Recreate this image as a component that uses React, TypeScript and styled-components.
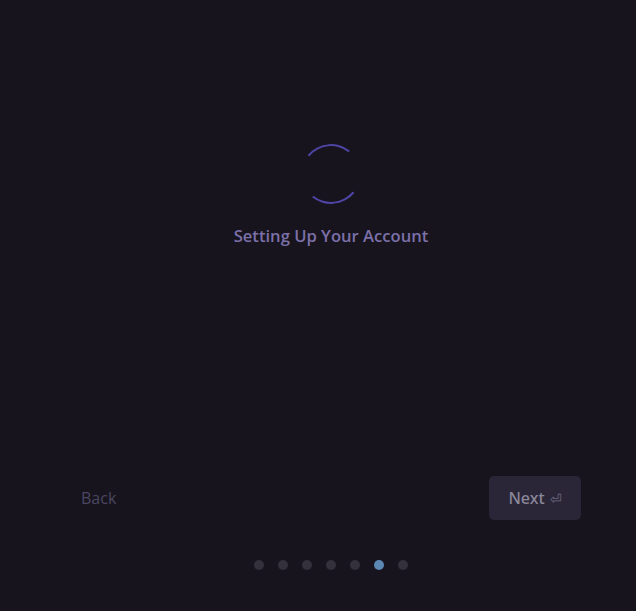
import React from "react";
import styled, { createGlobalStyle } from "styled-components";

const GlobalStyle = createGlobalStyle`
  html, body {
    margin: 0;
    padding: 0;
    background: #17141d;
  }
  body {
    font-family: "Open Sans", "Noto Sans", sans-serif;
  }
`;

const Page = styled.div`
  height: 611px;
  box-sizing: border-box;
  display: flex;
  flex-direction: column;
  padding: 0 55px 41px 81px;
  background: #17141d;
`;

const Loading = styled.div`
  display: flex;
  flex-direction: column;
  align-items: center;
  padding-top: 144px;
  flex: 1;
`;

const Spinner = styled.div`
  width: 60px;
  height: 60px;
  box-sizing: border-box;
  border-radius: 50%;
  border: 2px solid transparent;
  border-top-color: #4d44a3;
  border-bottom-color: #4d44a3;
  transform: rotate(-6deg);
`;

const Title = styled.div`
  margin-top: 20px;
  font-size: 16.6px;
  font-weight: 600;
  color: #7c70a9;
  line-height: 24px;
`;

const Footer = styled.div`
  display: flex;
  justify-content: space-between;
  align-items: center;
`;

const BackButton = styled.button`
  background: none;
  border: none;
  padding: 0;
  font-family: inherit;
  font-size: 16px;
  color: #4b4661;
  cursor: pointer;
`;

const NextButton = styled.button`
  width: 92px;
  height: 44px;
  border: none;
  border-radius: 5px;
  background: #2a2638;
  color: #8a8799;
  font-family: "Noto Sans", "Open Sans", sans-serif;
  font-size: 16px;
  font-weight: 500;
  display: flex;
  align-items: center;
  justify-content: center;
  gap: 5px;
  cursor: pointer;
`;

const Enter = styled.span`
  font-size: 14px;
  font-weight: 400;
  color: #6f6c80;
`;

const Dots = styled.div`
  display: flex;
  justify-content: center;
  gap: 14px;
  margin-top: 40px;
`;

const Dot = styled.span<{ $active?: boolean }>`
  width: 10px;
  height: 10px;
  border-radius: 50%;
  background: ${(p) => (p.$active ? "#5b87b3" : "#34313d")};
`;

const steps = [0, 1, 2, 3, 4, 5, 6];
const current = 5;

export default function App() {
  return (
    <>
      <GlobalStyle />
      <Page>
        <Loading>
          <Spinner />
          <Title>Setting Up Your Account</Title>
        </Loading>
        <Footer>
          <BackButton>Back</BackButton>
          <NextButton>
            Next <Enter>⏎</Enter>
          </NextButton>
        </Footer>
        <Dots>
          {steps.map((s) => (
            <Dot key={s} $active={s === current} />
          ))}
        </Dots>
      </Page>
    </>
  );
}
